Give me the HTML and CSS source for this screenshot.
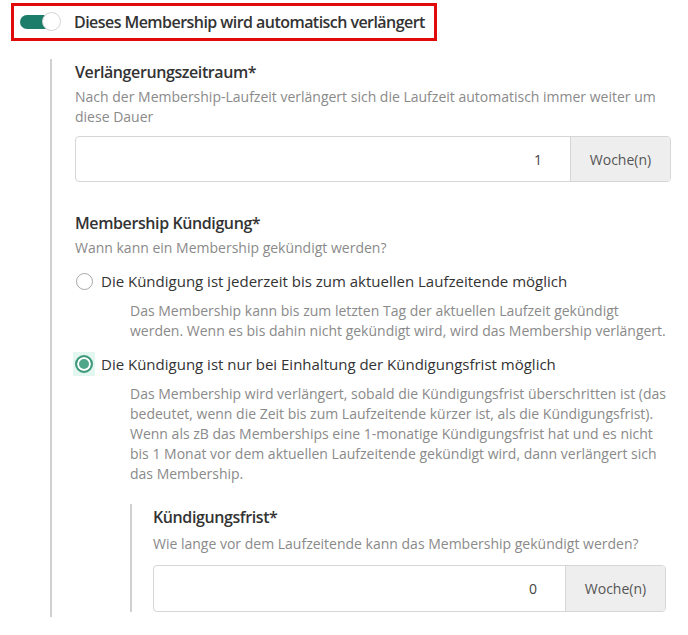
FILE: index.html
```html
<!DOCTYPE html>
<html lang="de">
<head>
    <meta charset="UTF-8">
    <meta name="viewport" content="width=device-width, initial-scale=1.0">
    <title>Membership Verlängerung</title>
    <link rel="stylesheet" href="styles.css">
</head>
<body>

    <div class="auto-renew">
        <span class="switch"><span class="knob"></span></span>
        <span class="auto-renew-label">Dieses Membership wird automatisch verlängert</span>
    </div>

    <div class="renew-settings">

        <div class="field">
            <div class="field-title">Verlängerungszeitraum*</div>
            <div class="field-help">Nach der Membership-Laufzeit verlängert sich die Laufzeit automatisch immer weiter um diese Dauer</div>
            <div class="input-group">
                <div class="input-value">1</div>
                <div class="input-addon">Woche(n)</div>
            </div>
        </div>

        <div class="field">
            <div class="field-title">Membership Kündigung*</div>
            <div class="field-help">Wann kann ein Membership gekündigt werden?</div>

            <div class="option">
                <div class="option-row">
                    <span class="radio-wrap"><span class="radio"></span></span>
                    <span class="option-label">Die Kündigung ist jederzeit bis zum aktuellen Laufzeitende möglich</span>
                </div>
                <div class="option-help">Das Membership kann bis zum letzten Tag der aktuellen Laufzeit gekündigt werden. Wenn es bis dahin nicht gekündigt wird, wird das Membership verlängert.</div>
            </div>

            <div class="option">
                <div class="option-row">
                    <span class="radio-wrap focused"><span class="radio checked"></span></span>
                    <span class="option-label">Die Kündigung ist nur bei Einhaltung der Kündigungsfrist möglich</span>
                </div>
                <div class="option-help">Das Membership wird verlängert, sobald die Kündigungsfrist überschritten ist (das bedeutet, wenn die Zeit bis zum Laufzeitende kürzer ist, als die Kündigungsfrist). Wenn als zB das Memberships eine 1-monatige Kündigungsfrist hat und es nicht bis 1 Monat vor dem aktuellen Laufzeitende gekündigt wird, dann verlängert sich das Membership.</div>

                <div class="notice-period">
                    <div class="field-title">Kündigungsfrist*</div>
                    <div class="field-help">Wie lange vor dem Laufzeitende kann das Membership gekündigt werden?</div>
                    <div class="input-group">
                        <div class="input-value">0</div>
                        <div class="input-addon">Woche(n)</div>
                    </div>
                </div>
            </div>
        </div>

    </div>

</body>
</html>
```

FILE: styles.css
```css
body {
    font-family: 'Open Sans', 'Noto Sans', sans-serif;
    margin: 0;
    padding: 0;
    background-color: #fff;
    color: #333;
}
.auto-renew {
    display: inline-flex;
    align-items: center;
    gap: 12px;
    margin: 3px 0 0 11px;
    padding: 4px 9px 4px 6px;
    border: 3px solid #e10b0b;
    height: 24px;
}
.switch {
    position: relative;
    display: inline-block;
    width: 32px;
    height: 14px;
    border-radius: 7px;
    background-color: #1c7d6b;
    margin-right: 10px;
}
.knob {
    position: absolute;
    top: -3px;
    right: -9px;
    width: 17px;
    height: 17px;
    border-radius: 50%;
    background-color: #fff;
    border: 1px solid #d4d4d4;
}
.auto-renew-label {
    font-size: 16px;
    font-weight: 600;
    color: #333;
    letter-spacing: -0.55px;
}
.renew-settings {
    margin: 18px 0 0 50px;
    border-left: 2px solid #d0d0d0;
    padding: 0 17px 5px 23px;
}
.field {
    padding-bottom: 28px;
}
.field:last-child {
    padding-bottom: 0;
}
.field-title {
    font-size: 16px;
    font-weight: 600;
    line-height: 22px;
    color: #333;
    padding-top: 2px;
    letter-spacing: -0.4px;
}
.field-help {
    font-size: 14px;
    line-height: 20px;
    color: #8a8a8a;
    margin-top: 4px;
}
.input-group {
    display: flex;
    margin-top: 9px;
    height: 44px;
    border: 1px solid #d6d6d6;
    border-radius: 4px;
    overflow: hidden;
}
.input-value {
    flex: 1;
    display: flex;
    align-items: center;
    justify-content: flex-end;
    padding-right: 28px;
    font-size: 14px;
    color: #444;
}
.input-addon {
    width: 99px;
    display: flex;
    align-items: center;
    justify-content: center;
    background-color: #eeeeee;
    border-left: 1px solid #d6d6d6;
    font-size: 14px;
    color: #555;
}
.option {
    margin-top: 11px;
}
.option-row {
    display: flex;
    align-items: center;
    gap: 6px;
    height: 24px;
}
.radio-wrap {
    display: flex;
    align-items: center;
    justify-content: center;
    width: 22px;
    height: 24px;
    margin-left: -2px;
}
.radio-wrap.focused {
    background-color: #e3f6ef;
}
.radio {
    width: 15px;
    height: 15px;
    border-radius: 50%;
    border: 1.5px solid #a8a8a8;
    background-color: #fff;
}
.radio.checked {
    border: 2px solid #3f9a7c;
    box-shadow: inset 0 0 0 2px #fff;
    background-color: #4fa688;
    width: 14px;
    height: 14px;
}
.option-label {
    font-size: 15px;
    color: #333;
}
.option-help {
    font-size: 14px;
    line-height: 20px;
    color: #8a8a8a;
    margin: 8px 0 0 55px;
}
.notice-period {
    margin: 20px 0 0 55px;
    border-left: 2px solid #d0d0d0;
    padding: 0 0 0 21px;
}
.notice-period .field-help {
    margin-top: 6px;
}
.notice-period .input-group {
    margin: 11px 5px 0 0;
    height: 45px;
}
```
